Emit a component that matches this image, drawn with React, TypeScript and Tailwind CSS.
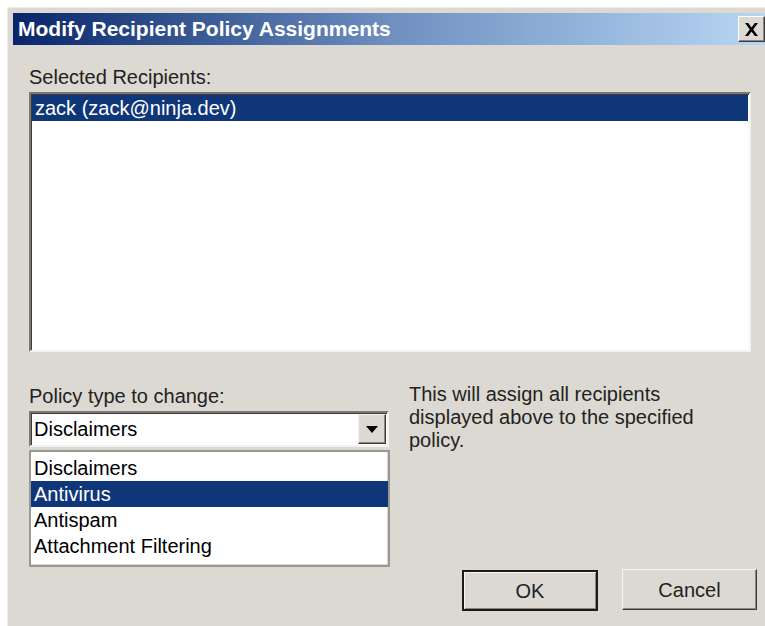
const items = ["Disclaimers", "Antivirus", "Antispam", "Attachment Filtering"]

export default function App() {
  return (
    <div
      className="min-h-screen bg-white pl-[7px] pt-[7px] overflow-hidden"
      style={{ fontFamily: '"Liberation Sans", Arial, sans-serif' }}
    >
      {/* dialog frame */}
      <div className="h-[640px] w-[800px] border-l border-t border-[#eeece8] bg-[#dcd9d2] pl-[5px] pt-[5px]">
        <TitleBar />

        <div className="pl-[16px] text-[20px] leading-none text-black">
          <div className="mt-[22px] h-[25px] text-[#222]">Selected Recipients:</div>

          <div className="h-[260px] w-[722px] border-2 border-t-[#7a7874] border-l-[#7a7874] border-b-[#f4f3f0] border-r-[#f4f3f0] bg-white shadow-[inset_1px_1px_0_#3c3b39]">
            <div className="mx-[1px] mt-[1px] flex h-[26px] items-center bg-[#10367a] pl-[3px] text-white">
              zack (zack@ninja.dev)
            </div>
          </div>

          <div className="flex">
            {/* policy selector */}
            <div className="w-[360px]">
              <div className="mt-[34px] h-[25px] text-[#222]">Policy type to change:</div>

              <div className="flex h-[36px] w-[360px] items-center border-2 border-t-[#7a7874] border-l-[#7a7874] border-b-[#f4f3f0] border-r-[#f4f3f0] bg-white shadow-[inset_1px_1px_0_#3c3b39]">
                <span className="flex-1 pl-[3px]">Disclaimers</span>
                <DropButton />
              </div>

              <div className="mt-[3px] w-[361px] border-2 border-[#9a9893] bg-white pt-[3px] pb-[6px] shadow-[inset_-1px_-1px_0_#d8d6d1]">
                {items.map((item) => (
                  <div
                    key={item}
                    className={
                      item === "Antivirus"
                        ? "flex h-[26px] items-center bg-[#10367a] pl-[3px] text-white"
                        : "flex h-[26px] items-center pl-[3px]"
                    }
                  >
                    {item}
                  </div>
                ))}
              </div>
            </div>

            {/* note and actions */}
            <div className="ml-[20px] flex flex-col">
              <p className="mt-[31px] w-[295px] leading-[23px] text-[#222]">
                This will assign all recipients displayed above to the specified policy.
              </p>
              <div className="mt-[118px] flex gap-[24px]">
                <button className="ml-[53px] h-[41px] w-[136px] border-2 border-[#1a1a1a] bg-[#dcd9d2] text-[20px] text-[#222] shadow-[inset_1px_1px_0_#f6f5f2,inset_-1px_-1px_0_#8a8883]">
                  OK
                </button>
                <button className="-mt-[1px] h-[41px] w-[135px] border border-t-[#f6f5f2] border-l-[#f6f5f2] border-b-[#3c3b39] border-r-[#3c3b39] bg-[#dcd9d2] text-[20px] text-[#222] shadow-[inset_-1px_-1px_0_#8a8883]">
                  Cancel
                </button>
              </div>
            </div>
          </div>
        </div>
      </div>
    </div>
  )
}

function TitleBar() {
  return (
    <div className="flex h-[32px] w-[752px] items-center bg-gradient-to-r from-[#0a246a] via-[#6f8fc0] to-[#b8d6f3] pl-[5px]">
      <span className="flex-1 text-[21px] font-bold text-white">
        Modify Recipient Policy Assignments
      </span>
      <div className="flex h-[26px] w-[27px] items-center justify-center border border-t-white border-l-white border-b-[#3c3b39] border-r-[#3c3b39] bg-[#dcd9d2] shadow-[inset_-1px_-1px_0_#8a8883]">
        <svg width="15" height="13" viewBox="0 0 15 13">
          <path d="M1 0h3.2l3.3 4.4L10.8 0H14L9.2 6.5 14 13h-3.2L7.5 8.6 4.2 13H1l4.8-6.5z" fill="#000" />
        </svg>
      </div>
    </div>
  )
}

function DropButton() {
  return (
    <div className="mr-[1px] flex h-[30px] w-[28px] items-center justify-center border border-t-[#f6f5f2] border-l-[#f6f5f2] border-b-[#3c3b39] border-r-[#3c3b39] bg-[#dcd9d2] shadow-[inset_-1px_-1px_0_#8a8883]">
      <svg width="12" height="7" viewBox="0 0 12 7">
        <path d="M0 0h12L6 7z" fill="#000" />
      </svg>
    </div>
  )
}
